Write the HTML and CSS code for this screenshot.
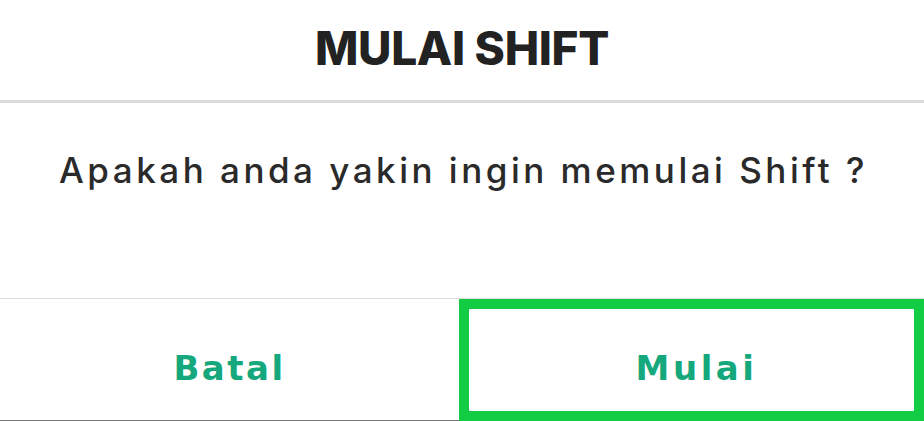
FILE: index.html
```html
<!DOCTYPE html>
<html lang="id">
<head>
    <meta charset="UTF-8">
    <meta name="viewport" content="width=device-width, initial-scale=1.0">
    <title>Mulai Shift</title>
    <link rel="stylesheet" href="styles.css">
</head>
<body>
    <div class="dialog">
        <div class="dialog-header">
            <h1 class="dialog-title">MULAI SHIFT</h1>
        </div>
        <div class="dialog-body">
            <p class="dialog-message">Apakah anda yakin ingin memulai Shift ?</p>
        </div>
        <div class="dialog-actions">
            <button type="button" class="action action-cancel">Batal</button>
            <button type="button" class="action action-confirm">Mulai</button>
        </div>
    </div>
</body>
</html>
```

FILE: styles.css
```css
html, body {
    margin: 0;
    padding: 0;
    background: #fff;
}
body {
    font-family: Inter, "DejaVu Sans", sans-serif;
    color: #222;
    width: 924px;
    height: 421px;
    overflow: hidden;
}
.dialog {
    display: flex;
    flex-direction: column;
    height: 421px;
}
.dialog-header {
    height: 100px;
    border-bottom: 3px solid #dcdcdc;
    display: flex;
    align-items: center;
    justify-content: center;
}
.dialog-title {
    margin: 0;
    padding-bottom: 4px;
    font-size: 46px;
    font-weight: 800;
    letter-spacing: -0.3px;
    color: #222;
    line-height: 1;
}
.dialog-body {
    height: 195px;
    border-bottom: 1px solid #dcdcdc;
    display: flex;
    justify-content: center;
}
.dialog-message {
    margin: 0;
    padding-top: 50px;
    padding-left: 3px;
    font-size: 35px;
    font-weight: 500;
    letter-spacing: 3.5px;
    color: #2a2a2a;
    line-height: 1;
}
.dialog-actions {
    flex: 1;
    display: flex;
}
.action {
    font-family: "DejaVu Sans", sans-serif;
    background: #fff;
    border: none;
    margin: 0;
    padding: 16px 0 0;
    font-size: 34px;
    font-weight: bold;
    letter-spacing: 2.5px;
    color: #14a87c;
    cursor: pointer;
}
.action-cancel {
    width: 459px;
    border-bottom: 1px solid #777;
}
.action-confirm {
    flex: 1;
    border: 10px solid #12cc44;
    padding-left: 10px;
    letter-spacing: 3.5px;
}
```
